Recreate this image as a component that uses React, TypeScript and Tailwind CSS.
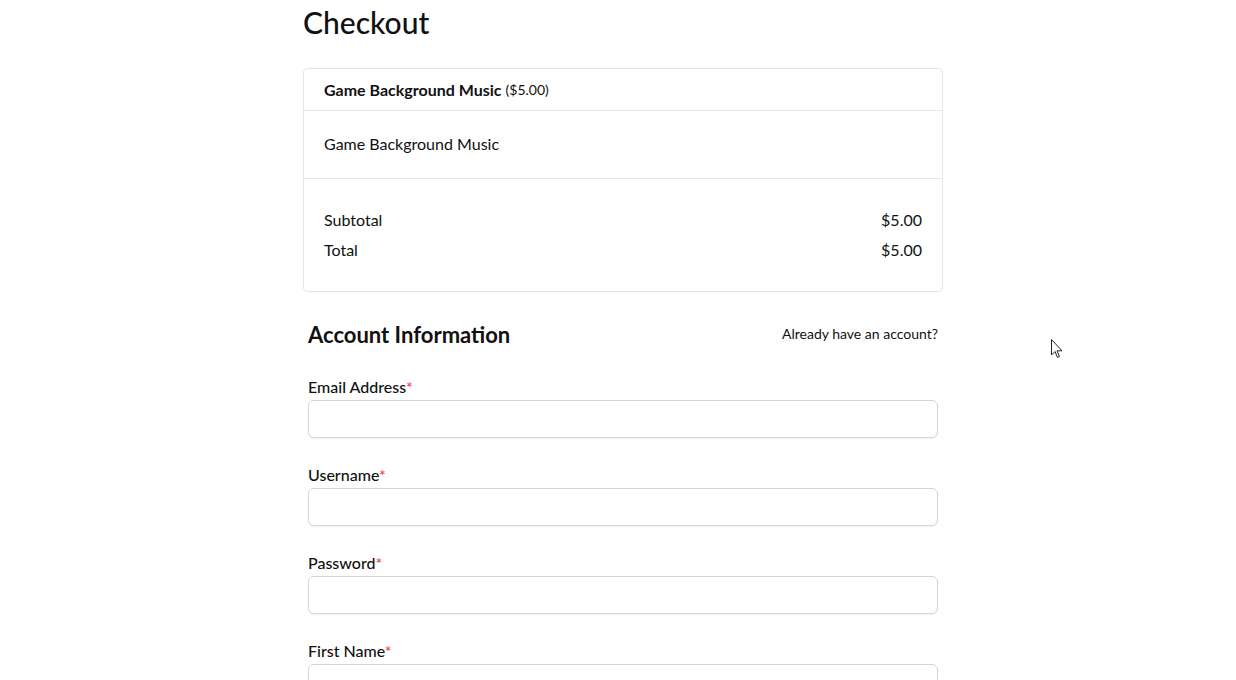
import { ReactNode } from "react";

function Field({ label }: { label: string }) {
  return (
    <div className="flex flex-col">
      <label className="text-[16px] leading-[24px] font-medium text-[#111]">
        {label}
        <span className="text-[#ef4444]">*</span>
      </label>
      <input
        type="text"
        className="mt-[1px] h-[38px] w-full rounded-[6px] border border-[#d4d4d8] bg-white shadow-[0_1px_2px_rgba(0,0,0,0.06)] outline-none"
      />
    </div>
  );
}

function Row({ children }: { children: ReactNode }) {
  return <div className="flex justify-between text-[16px] leading-[30px]">{children}</div>;
}

export default function App() {
  return (
    <div className="relative h-screen overflow-hidden bg-white font-['Lato',sans-serif] text-[#111]">
      <div className="ml-[303px] w-[640px]">
        <h1 className="pt-[4px] text-[30px] leading-[36px] font-medium">Checkout</h1>

        <div className="mt-[28px] rounded-[4px] border border-[#e5e5e5]">
          <div className="flex h-[42px] items-center border-b border-[#e5e5e5] px-[20px]">
            <span className="text-[16px] font-bold">Game Background Music</span>
            <span className="ml-[4px] text-[14px]">($5.00)</span>
          </div>
          <div className="flex h-[68px] items-center border-b border-[#e5e5e5] px-[20px] pb-[2px] text-[16px]">
            Game Background Music
          </div>
          <div className="px-[20px] pt-[26px] pb-[26px]">
            <Row>
              <span>Subtotal</span>
              <span>$5.00</span>
            </Row>
            <Row>
              <span>Total</span>
              <span>$5.00</span>
            </Row>
          </div>
        </div>

        <div className="px-[5px]">
          <div className="mt-[28px] flex items-center justify-between">
            <h2 className="text-[22px] leading-[30px] font-bold">Account Information</h2>
            <a className="pb-[4px] text-[14px] text-[#111]">Already have an account?</a>
          </div>
          <div className="mt-[25px] flex flex-col gap-[25px]">
            <Field label="Email Address" />
            <Field label="Username" />
            <Field label="Password" />
            <Field label="First Name" />
          </div>
        </div>
      </div>

      <svg
        className="absolute left-[1051px] top-[339px]"
        width="13"
        height="21"
        viewBox="0 0 13 21"
      >
        <path
          d="M0.5 0.5 L0.5 16 L4 12.5 L6.5 18.5 L8.5 17.6 L6 11.8 L11 11.8 Z"
          fill="white"
          stroke="#222"
          strokeWidth="1"
          strokeLinejoin="round"
        />
      </svg>
    </div>
  );
}
